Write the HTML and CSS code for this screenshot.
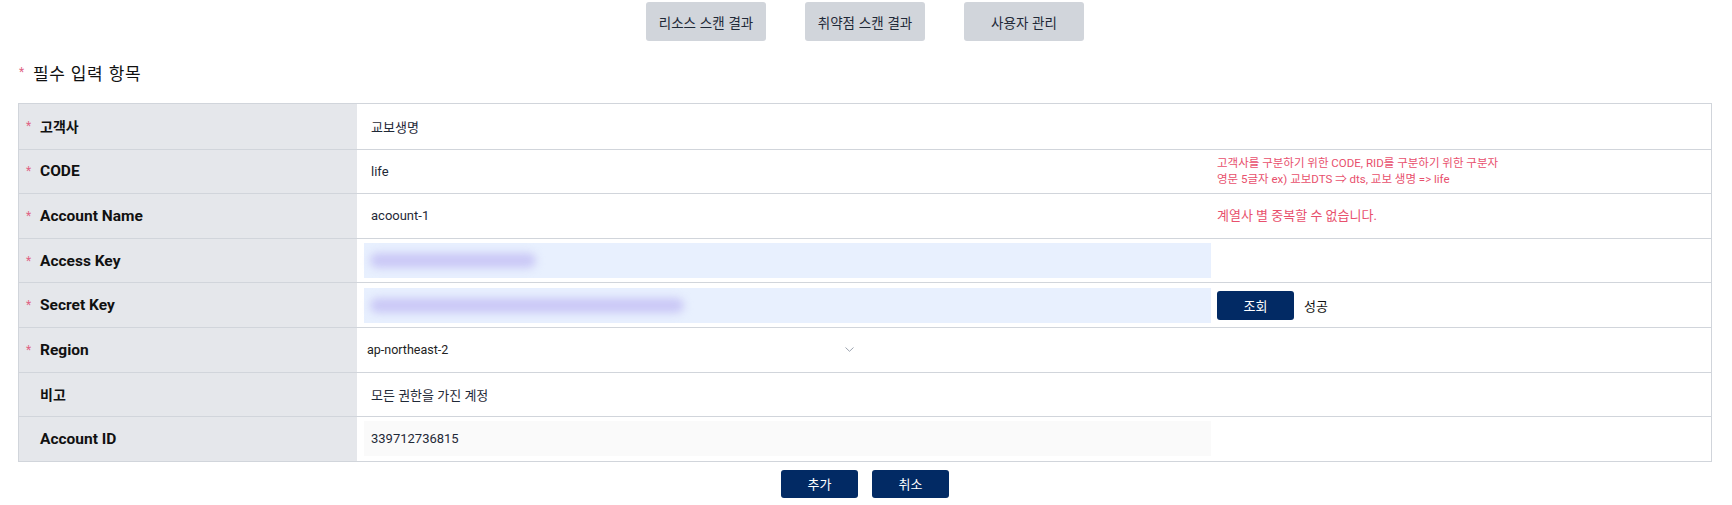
FILE: index.html
```html
<!DOCTYPE html>
<html lang="ko">
<head>
<meta charset="utf-8">
<title>계정 등록</title>
<link rel="stylesheet" href="styles.css">
</head>
<body>
<div class="page">
  <nav class="tabs">
    <button class="tab">리소스 스캔 결과</button>
    <button class="tab">취약점 스캔 결과</button>
    <button class="tab">사용자 관리</button>
  </nav>
  <h2 class="title"><span class="req">*</span>필수 입력 항목</h2>
  <div class="form">
    <div class="row">
      <div class="label"><span class="req">*</span><span class="ko">고객사</span></div>
      <div class="value"><span class="val">교보생명</span></div>
      <div class="note"></div>
    </div>
    <div class="row">
      <div class="label"><span class="req">*</span>CODE</div>
      <div class="value"><span class="val">life</span></div>
      <div class="note">
        <p class="hint small">고객사를 구분하기 위한 CODE, RID를 구분하기 위한 구분자</p>
        <p class="hint small">영문 5글자 ex) 교보DTS ⇒ dts, 교보 생명 =&gt; life</p>
      </div>
    </div>
    <div class="row">
      <div class="label"><span class="req">*</span>Account Name</div>
      <div class="value"><span class="val">acoount-1</span></div>
      <div class="note"><p class="hint">계열사 별 중복할 수 없습니다.</p></div>
    </div>
    <div class="row">
      <div class="label"><span class="req">*</span>Access Key</div>
      <div class="value"><div class="input filled"><span class="blur short"></span></div></div>
      <div class="note"></div>
    </div>
    <div class="row">
      <div class="label"><span class="req">*</span>Secret Key</div>
      <div class="value"><div class="input filled"><span class="blur long"></span></div></div>
      <div class="note inline"><button class="btn check">조회</button><span class="status">성공</span></div>
    </div>
    <div class="row">
      <div class="label"><span class="req">*</span>Region</div>
      <div class="value">
        <div class="select"><span class="select-text">ap-northeast-2</span>
          <svg class="chev" width="9" height="5" viewBox="0 0 9 5"><path d="M0.5 0.5 L4.5 4.3 L8.5 0.5" fill="none" stroke="#9ca3af" stroke-width="1"/></svg>
        </div>
      </div>
      <div class="note"></div>
    </div>
    <div class="row">
      <div class="label"><span class="req"></span><span class="ko">비고</span></div>
      <div class="value"><span class="val">모든 권한을 가진 계정</span></div>
      <div class="note"></div>
    </div>
    <div class="row">
      <div class="label"><span class="req"></span>Account ID</div>
      <div class="value"><div class="input readonly"><span class="val">339712736815</span></div></div>
      <div class="note"></div>
    </div>
  </div>
  <div class="actions">
    <button class="btn action">추가</button>
    <button class="btn action">취소</button>
  </div>
</div>
</body>
</html>
```

FILE: styles.css
```css
* { box-sizing: border-box; }
body {
  margin: 0;
  font-family: Roboto, "Noto Sans CJK KR", sans-serif;
  color: #111827;
  background: #fff;
}
.page {
  margin: 0 20px 0 18px;
}
.tabs {
  display: flex;
  justify-content: center;
  gap: 39px;
  padding-top: 2px;
}
.tab {
  width: 120px;
  height: 39px;
  border: none;
  border-radius: 3px;
  background: #d1d5db;
  color: #1f2937;
  font-family: "Noto Sans CJK KR", sans-serif;
  font-size: 13.5px;
  padding: 0;
}
.title {
  margin: 0;
  height: 62px;
  display: flex;
  align-items: center;
  font-family: "Noto Sans CJK KR", sans-serif;
  font-weight: 400;
  font-size: 17px;
  letter-spacing: 0.6px;
  color: #111;
}
.title .req {
  width: 15px;
  padding-left: 1px;
  letter-spacing: 0;
}
.req {
  color: #e06383;
  font-family: Roboto, sans-serif;
  font-size: 12px;
  font-weight: 400;
  display: inline-block;
  width: 14px;
}
.form {
  border: 1px solid #d1d5db;
}
.row {
  display: grid;
  grid-template-columns: 338px 854px 1fr;
  height: 44.6px;
}
.row + .row {
  border-top: 1px solid #d1d5db;
}
.label {
  background: #e5e7eb;
  display: flex;
  align-items: center;
  padding-left: 7px;
  font-weight: 700;
  font-size: 15.5px;
  color: #111;
}
.label .ko {
  font-family: "Noto Sans CJK KR", sans-serif;
  font-size: 14px;
}
.value {
  display: flex;
  align-items: center;
  padding-left: 7px;
}
.val {
  padding-left: 7px;
  font-size: 13px;
  color: #1f2937;
}
.input {
  width: 847px;
  height: 35px;
  display: flex;
  align-items: center;
}
.input.filled { background: #e8f0fe; }
.input.readonly { background: #fafafa; }
.blur {
  display: block;
  height: 15px;
  margin-left: 6px;
  border-radius: 8px;
  background: #cac8f6;
  filter: blur(4px);
}
.blur.short { width: 166px; }
.blur.long { width: 314px; }
.select {
  width: 497px;
  display: flex;
  align-items: center;
  justify-content: space-between;
  padding: 0 7px 0 3px;
}
.select-text {
  font-size: 12.5px;
  color: #222;
}
.chev { display: block; }
.note {
  display: flex;
  flex-direction: column;
  justify-content: center;
  padding-left: 6px;
}
.note.inline {
  flex-direction: row;
  align-items: center;
  justify-content: flex-start;
  gap: 10px;
}
.hint {
  margin: 0;
  color: #e8506d;
  font-size: 13px;
  line-height: 18px;
}
.hint.small {
  font-size: 11.5px;
  line-height: 16.5px;
}
.btn {
  border: none;
  border-radius: 3px;
  background: #022a64;
  color: #fff;
  font-family: "Noto Sans CJK KR", sans-serif;
  font-size: 13px;
  padding: 0;
}
.check {
  width: 77px;
  height: 29px;
}
.status {
  font-family: "Noto Sans CJK KR", sans-serif;
  font-size: 13px;
  color: #111;
}
.actions {
  display: flex;
  justify-content: center;
  gap: 14px;
  margin-top: 8px;
}
.action {
  width: 77px;
  height: 28px;
}
```
